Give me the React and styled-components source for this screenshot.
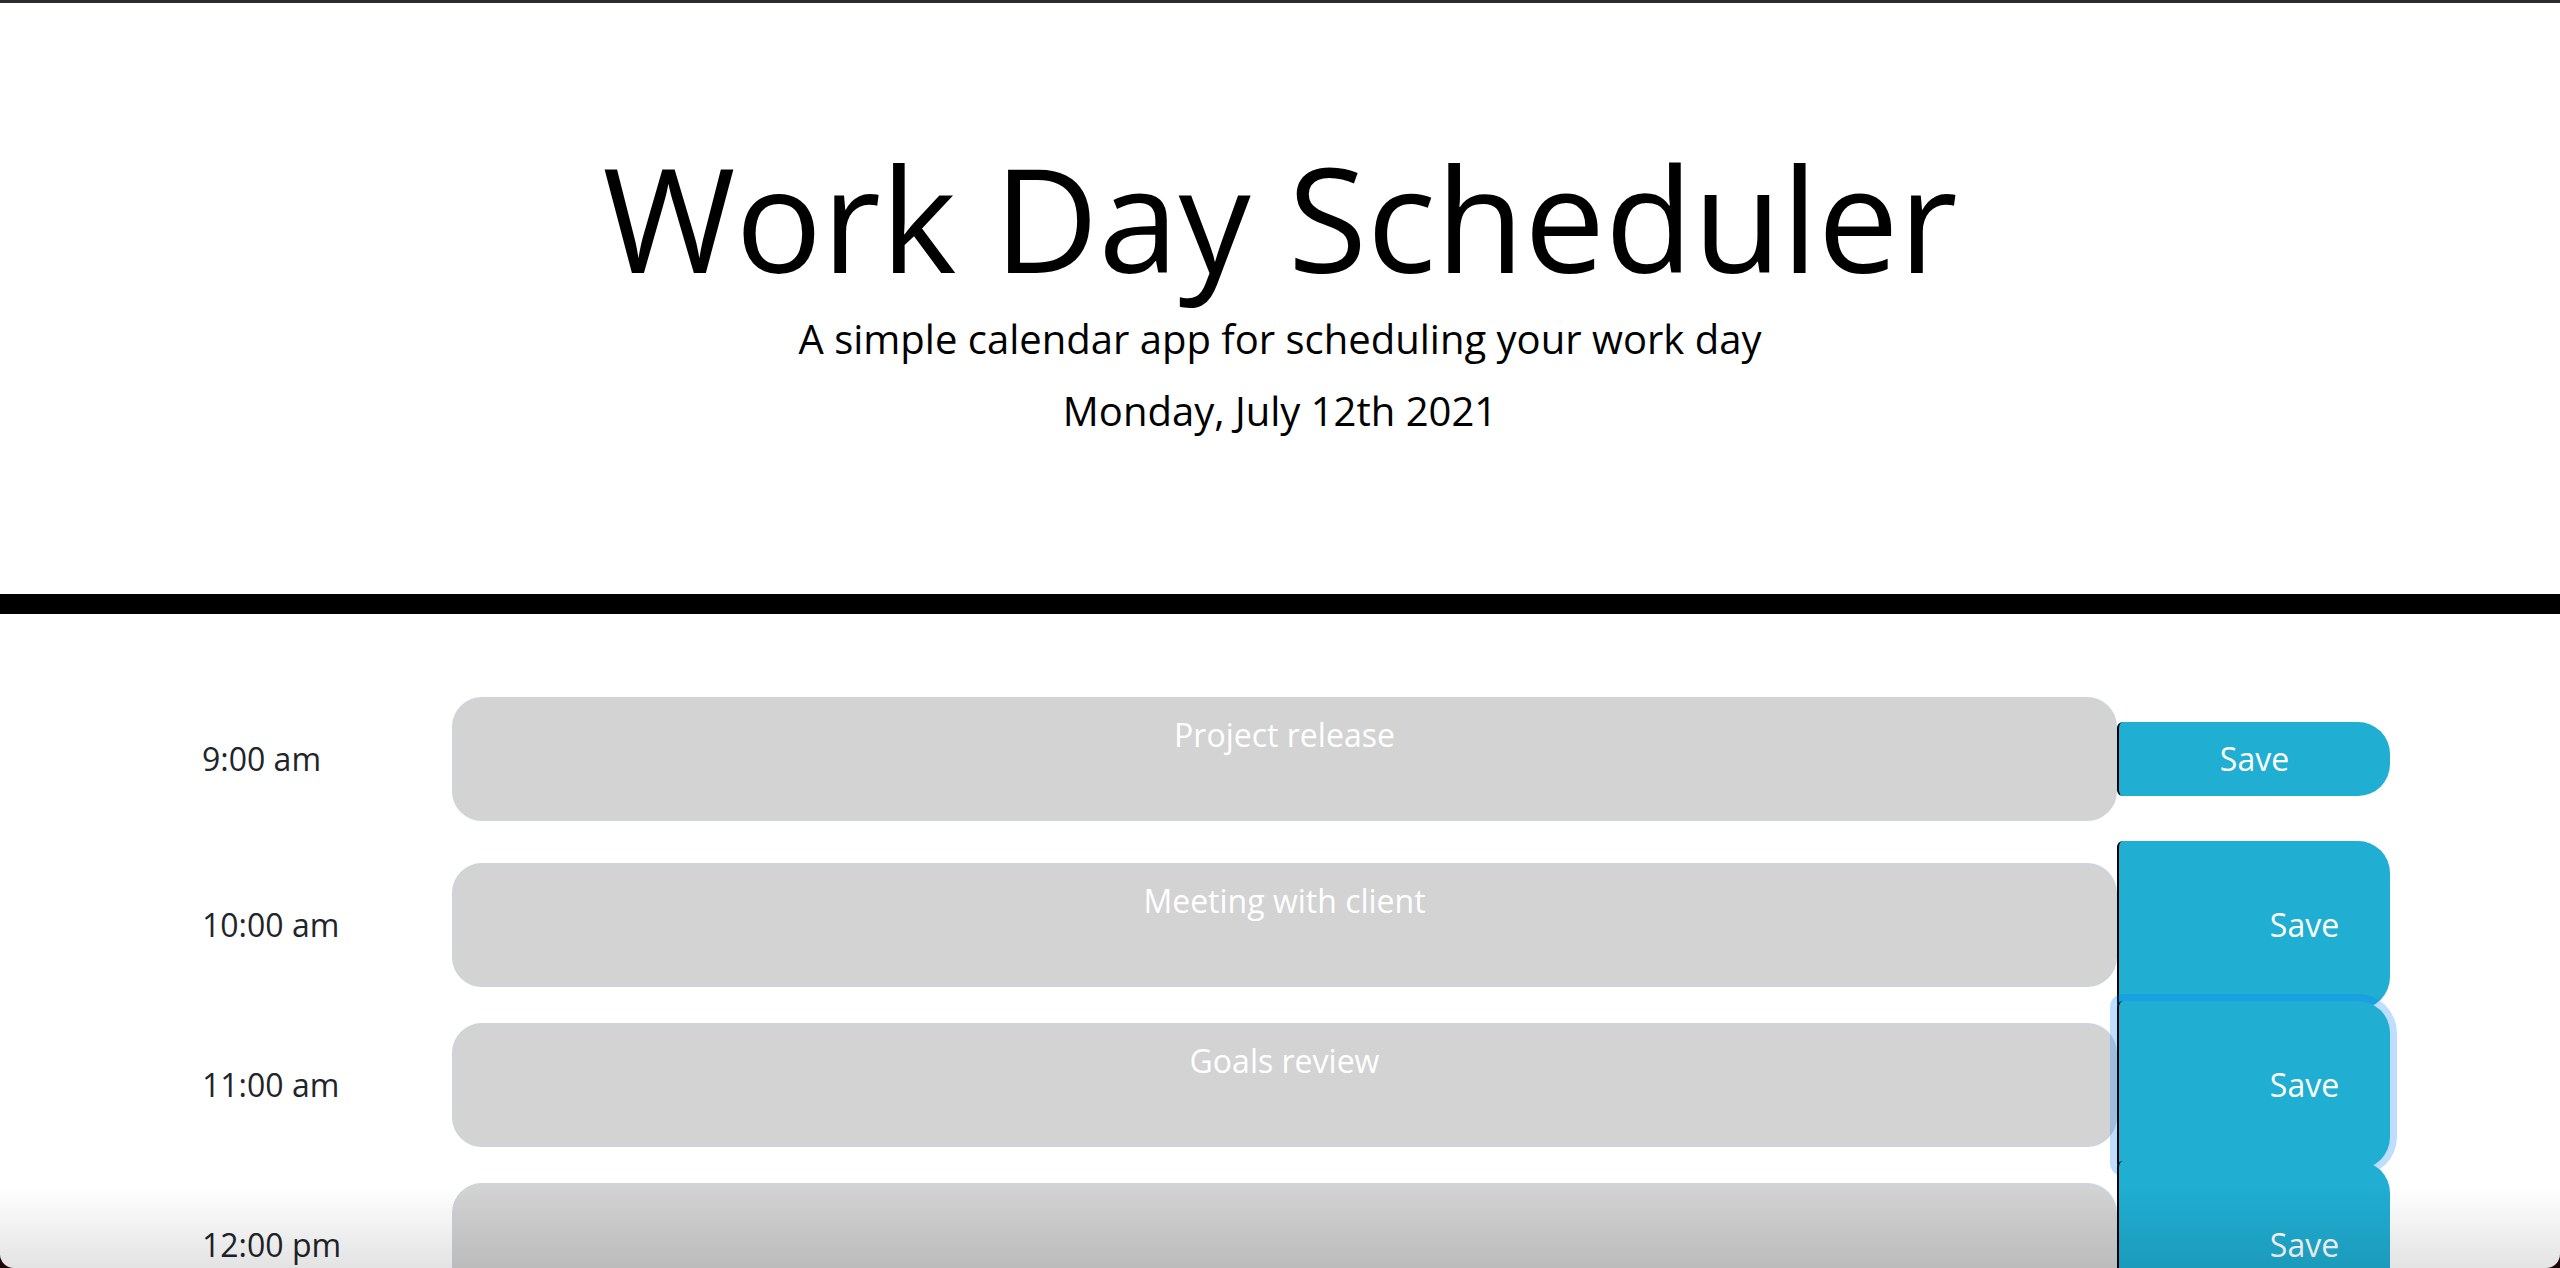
import React from "react";
import styled, { createGlobalStyle } from "styled-components";

const hours = [
  { label: "9:00 am", text: "Project release", compact: true },
  { label: "10:00 am", text: "Meeting with client" },
  { label: "11:00 am", text: "Goals review", focused: true },
  { label: "12:00 pm", text: "" },
  { label: "1:00 pm", text: "" },
  { label: "2:00 pm", text: "" },
  { label: "3:00 pm", text: "" },
  { label: "4:00 pm", text: "" },
  { label: "5:00 pm", text: "" },
];

const GlobalStyle = createGlobalStyle`
  body {
    margin: 0;
    background: #ffffff;
    font-family: "Open Sans", "Noto Sans", sans-serif;
    color: #212529;
  }
`;

const App = () => {
  return (
    <>
      <GlobalStyle />
      <Jumbotron>
        <Title>Work Day Scheduler</Title>
        <Lead>A simple calendar app for scheduling your work day</Lead>
        <CurrentDay>Monday, July 12th 2021</CurrentDay>
      </Jumbotron>
      <Container>
        {hours.map((hour, i) => (
          <TimeBlock key={hour.label} $first={i === 0}>
            <Hour>{hour.label}</Hour>
            <Description defaultValue={hour.text} />
            <SaveBtn $compact={hour.compact} $focused={hour.focused}>
              Save
            </SaveBtn>
          </TimeBlock>
        ))}
      </Container>
      <WindowFrame />
    </>
  );
};

const Jumbotron = styled.header`
  border-top: 3px solid #2c2c2e;
  border-bottom: 20px solid #000000;
  padding: 128px 64px 135px;
  text-align: center;
  background: #ffffff;
`;

const Title = styled.h1`
  margin: 0 0 5px;
  font-size: 144px;
  font-weight: 400;
  line-height: 1.2;
  color: #000000;
`;

const Lead = styled.p`
  margin: 0 0 12px;
  font-size: 40px;
  font-weight: 400;
  line-height: 60px;
  color: #000000;
`;

const CurrentDay = styled(Lead)`
  margin-bottom: 18px;
`;

const Container = styled.main`
  width: 2220px;
  margin: 0 auto;
  padding: 83px 0 120px;
`;

const TimeBlock = styled.div`
  display: flex;
  align-items: center;
  height: 124px;
  margin-bottom: ${({ $first }) => ($first ? "42px" : "36px")};
`;

const Hour = styled.div`
  flex: 0 0 282px;
  box-sizing: border-box;
  padding-left: 32px;
  font-size: 32px;
  line-height: 48px;
  color: #212529;
`;

const Description = styled.textarea`
  flex: 1 1 auto;
  box-sizing: border-box;
  height: 124px;
  padding: 12px 24px;
  border: 2px solid #cfd4da;
  border-radius: 30px;
  background: #d3d3d3;
  color: #ffffff;
  font-family: "Open Sans", "Noto Sans", sans-serif;
  font-size: 32px;
  line-height: 48px;
  text-align: center;
  resize: none;
  outline: none;
`;

const SaveBtn = styled.button`
  flex: 0 0 273px;
  box-sizing: border-box;
  height: ${({ $compact }) => ($compact ? "74px" : "168px")};
  padding: 0 0 0 ${({ $compact }) => ($compact ? "0" : "100px")};
  border: none;
  border-left: 2px solid #000000;
  border-radius: 6px 32px 32px 6px;
  background: #20aed3;
  color: #ffffff;
  font-family: "Open Sans", "Noto Sans", sans-serif;
  font-size: 32px;
  text-align: center;
  cursor: pointer;
  box-shadow: ${({ $focused }) =>
    $focused ? "0 0 0 7px rgba(0, 123, 255, 0.25)" : "none"};
`;

const WindowFrame = styled.div`
  position: fixed;
  inset: 0;
  pointer-events: none;
  border-radius: 0 0 14px 14px;
  box-shadow: 0 0 0 40px #1c0609;
  background: linear-gradient(
    to bottom,
    rgba(0, 0, 0, 0) 0,
    rgba(0, 0, 0, 0) calc(100% - 80px),
    rgba(0, 0, 0, 0.11) 100%
  );
`;

export default App;
